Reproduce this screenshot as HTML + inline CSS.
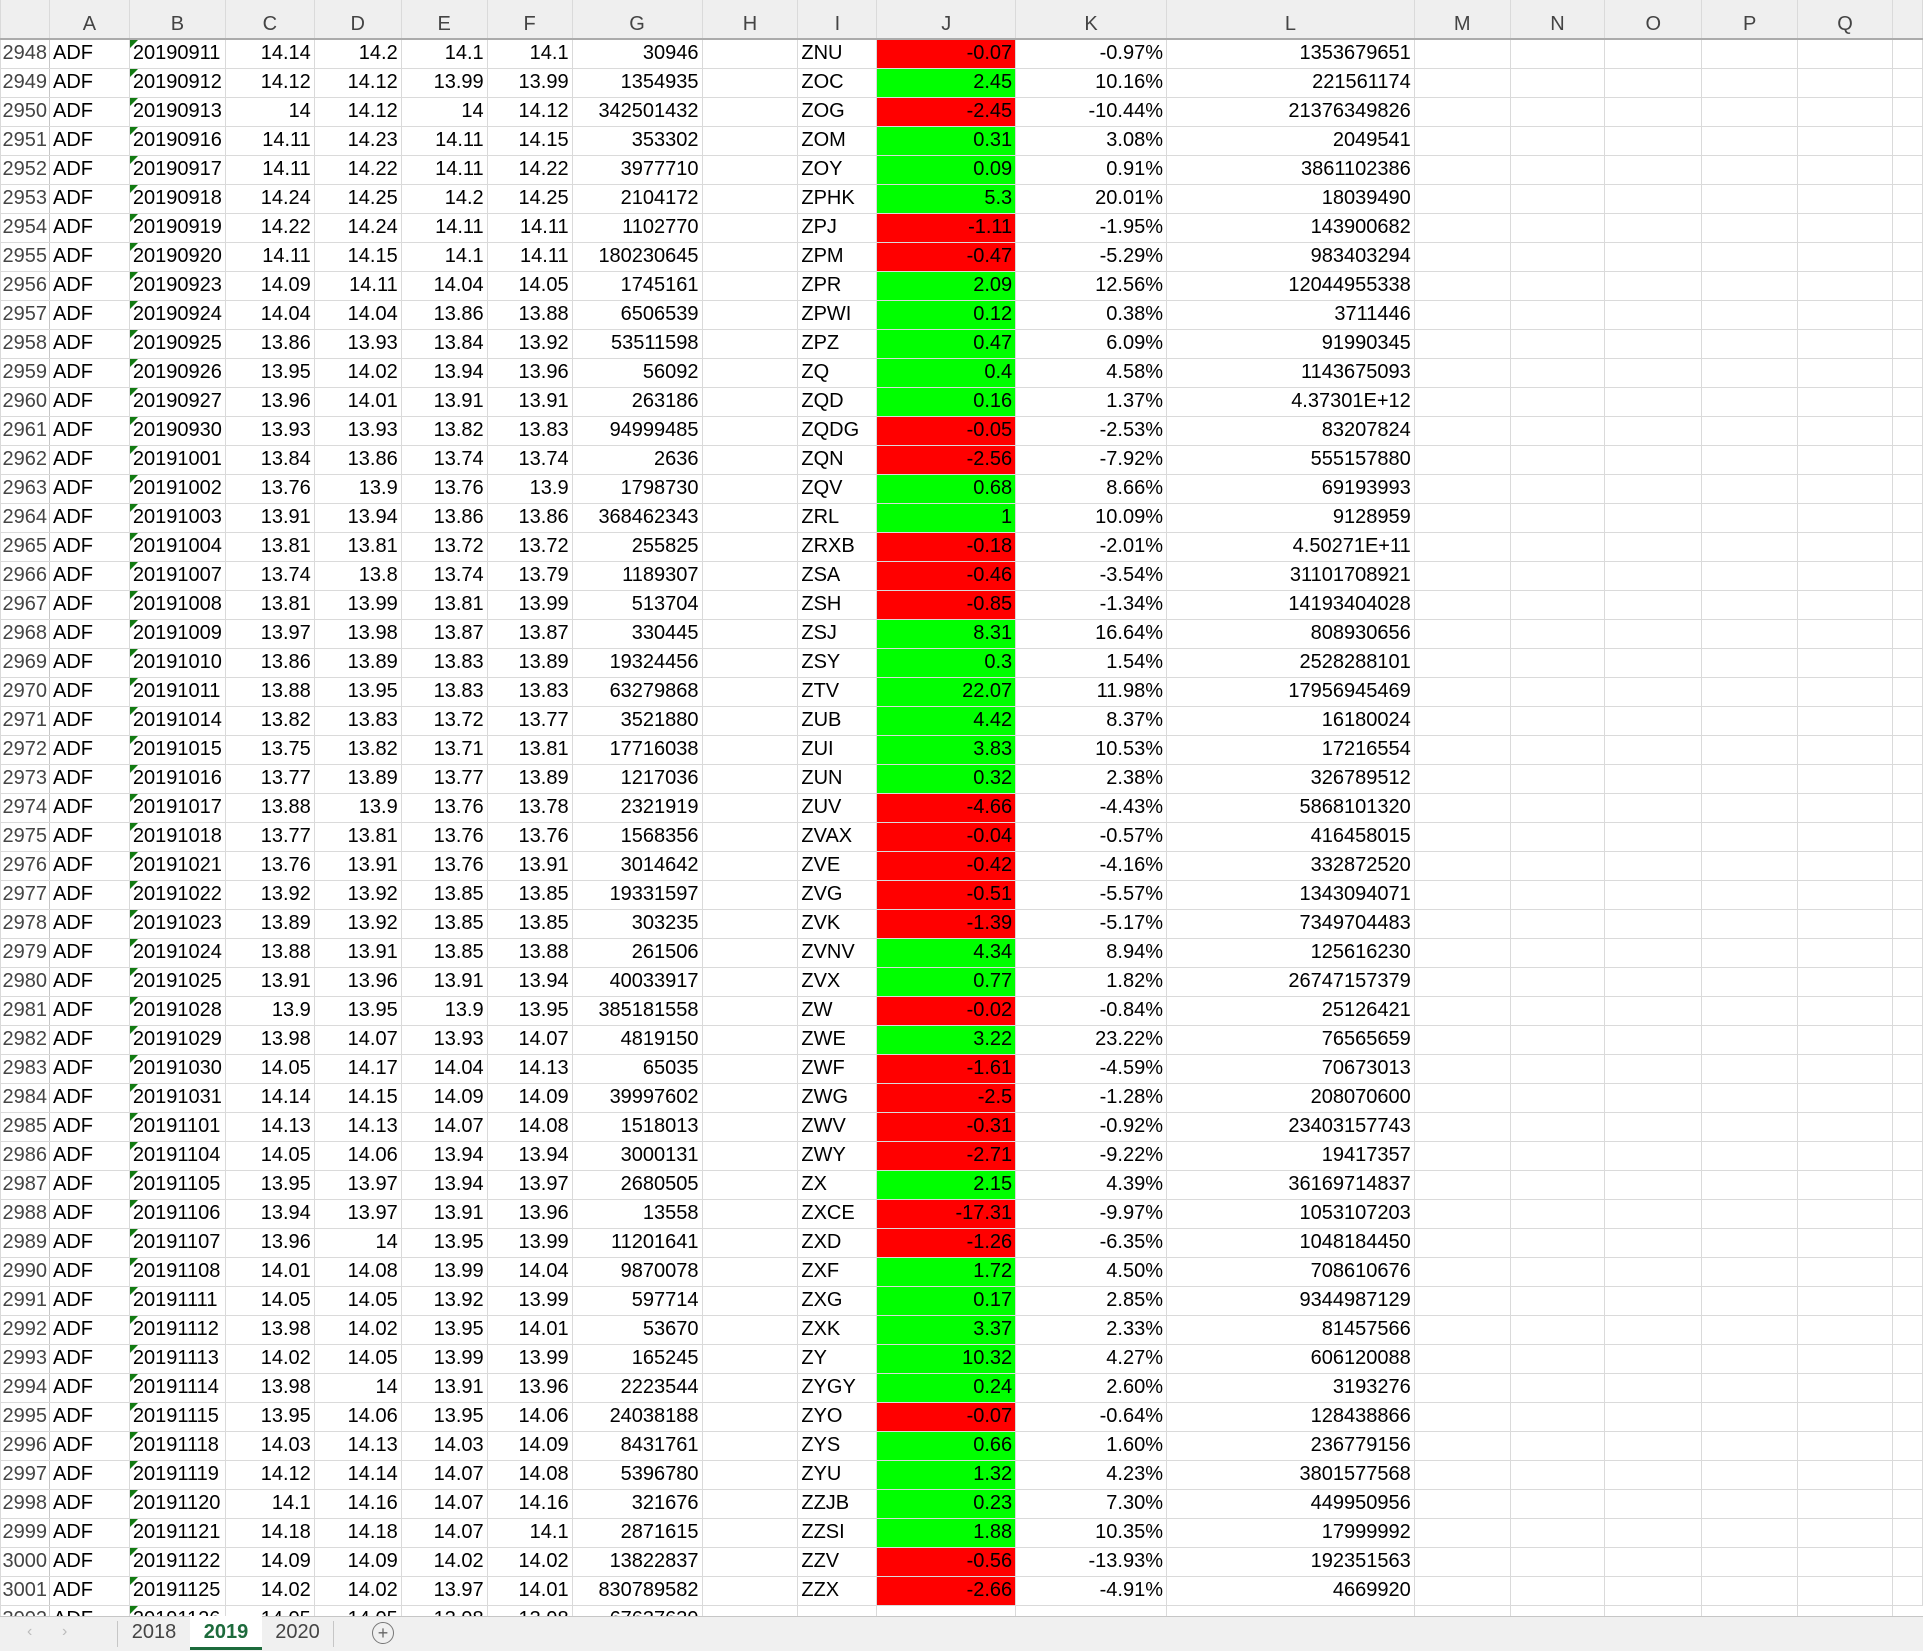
<!DOCTYPE html>
<html><head><meta charset="utf-8"><style>
body{margin:0;width:1923px;height:1651px;overflow:hidden;background:#fff;font-family:"Liberation Sans",Arial,sans-serif;}
#wrap{position:absolute;left:0;top:0;width:1923px;height:1616px;overflow:hidden;}
table{border-collapse:collapse;table-layout:fixed;font-size:20px;color:#000;}
td,th{padding:0 3px;white-space:nowrap;overflow:hidden;border:1px solid #dadada;text-align:right;font-weight:normal;box-sizing:border-box;}
tr{height:29px;}
thead th{height:39px;background:#efefef;color:#444;text-align:center;vertical-align:bottom;padding-bottom:2px;border-color:#dadada;border-top:none;border-bottom:2px solid #ababab;font-size:20px;}
tbody th{color:#444;background:#fff;text-align:right;padding:0 2px 0 0;border-right:1px solid #c8c8c8;}
td.l{text-align:left;}
td.b{position:relative;text-align:left;}
td.b:before{content:"";position:absolute;left:0;top:0;border-top:8px solid #127a12;border-right:8px solid transparent;}
td.r{background:#ff0000;}
td.g{background:#00ff00;}
#tabs{position:absolute;left:0;top:1616px;width:1923px;height:35px;background:#f0f0f0;border-top:1px solid #c6c6c6;box-sizing:border-box;color:#444;font-size:20px;}
.tab{position:absolute;top:0;height:33px;line-height:30px;text-align:center;}
</style></head><body>
<div id="wrap">
<table>
<colgroup><col style="width:49px"><col style="width:80px"><col style="width:95px"><col style="width:89px"><col style="width:87px"><col style="width:86px"><col style="width:85px"><col style="width:130px"><col style="width:96px"><col style="width:79px"><col style="width:139px"><col style="width:151px"><col style="width:248px"><col style="width:96px"><col style="width:95px"><col style="width:97px"><col style="width:96px"><col style="width:95px"><col style="width:30px"></colgroup>
<thead><tr><th></th><th>A</th><th>B</th><th>C</th><th>D</th><th>E</th><th>F</th><th>G</th><th>H</th><th>I</th><th>J</th><th>K</th><th>L</th><th>M</th><th>N</th><th>O</th><th>P</th><th>Q</th><th></th></tr></thead>
<tbody>
<tr><th>2948<td class=l>ADF<td class=b>20190911<td>14.14<td>14.2<td>14.1<td>14.1<td>30946<td><td class=l>ZNU<td class=r>-0.07<td>-0.97%<td>1353679651<td><td><td><td><td><td></tr>
<tr><th>2949<td class=l>ADF<td class=b>20190912<td>14.12<td>14.12<td>13.99<td>13.99<td>1354935<td><td class=l>ZOC<td class=g>2.45<td>10.16%<td>221561174<td><td><td><td><td><td></tr>
<tr><th>2950<td class=l>ADF<td class=b>20190913<td>14<td>14.12<td>14<td>14.12<td>342501432<td><td class=l>ZOG<td class=r>-2.45<td>-10.44%<td>21376349826<td><td><td><td><td><td></tr>
<tr><th>2951<td class=l>ADF<td class=b>20190916<td>14.11<td>14.23<td>14.11<td>14.15<td>353302<td><td class=l>ZOM<td class=g>0.31<td>3.08%<td>2049541<td><td><td><td><td><td></tr>
<tr><th>2952<td class=l>ADF<td class=b>20190917<td>14.11<td>14.22<td>14.11<td>14.22<td>3977710<td><td class=l>ZOY<td class=g>0.09<td>0.91%<td>3861102386<td><td><td><td><td><td></tr>
<tr><th>2953<td class=l>ADF<td class=b>20190918<td>14.24<td>14.25<td>14.2<td>14.25<td>2104172<td><td class=l>ZPHK<td class=g>5.3<td>20.01%<td>18039490<td><td><td><td><td><td></tr>
<tr><th>2954<td class=l>ADF<td class=b>20190919<td>14.22<td>14.24<td>14.11<td>14.11<td>1102770<td><td class=l>ZPJ<td class=r>-1.11<td>-1.95%<td>143900682<td><td><td><td><td><td></tr>
<tr><th>2955<td class=l>ADF<td class=b>20190920<td>14.11<td>14.15<td>14.1<td>14.11<td>180230645<td><td class=l>ZPM<td class=r>-0.47<td>-5.29%<td>983403294<td><td><td><td><td><td></tr>
<tr><th>2956<td class=l>ADF<td class=b>20190923<td>14.09<td>14.11<td>14.04<td>14.05<td>1745161<td><td class=l>ZPR<td class=g>2.09<td>12.56%<td>12044955338<td><td><td><td><td><td></tr>
<tr><th>2957<td class=l>ADF<td class=b>20190924<td>14.04<td>14.04<td>13.86<td>13.88<td>6506539<td><td class=l>ZPWI<td class=g>0.12<td>0.38%<td>3711446<td><td><td><td><td><td></tr>
<tr><th>2958<td class=l>ADF<td class=b>20190925<td>13.86<td>13.93<td>13.84<td>13.92<td>53511598<td><td class=l>ZPZ<td class=g>0.47<td>6.09%<td>91990345<td><td><td><td><td><td></tr>
<tr><th>2959<td class=l>ADF<td class=b>20190926<td>13.95<td>14.02<td>13.94<td>13.96<td>56092<td><td class=l>ZQ<td class=g>0.4<td>4.58%<td>1143675093<td><td><td><td><td><td></tr>
<tr><th>2960<td class=l>ADF<td class=b>20190927<td>13.96<td>14.01<td>13.91<td>13.91<td>263186<td><td class=l>ZQD<td class=g>0.16<td>1.37%<td>4.37301E+12<td><td><td><td><td><td></tr>
<tr><th>2961<td class=l>ADF<td class=b>20190930<td>13.93<td>13.93<td>13.82<td>13.83<td>94999485<td><td class=l>ZQDG<td class=r>-0.05<td>-2.53%<td>83207824<td><td><td><td><td><td></tr>
<tr><th>2962<td class=l>ADF<td class=b>20191001<td>13.84<td>13.86<td>13.74<td>13.74<td>2636<td><td class=l>ZQN<td class=r>-2.56<td>-7.92%<td>555157880<td><td><td><td><td><td></tr>
<tr><th>2963<td class=l>ADF<td class=b>20191002<td>13.76<td>13.9<td>13.76<td>13.9<td>1798730<td><td class=l>ZQV<td class=g>0.68<td>8.66%<td>69193993<td><td><td><td><td><td></tr>
<tr><th>2964<td class=l>ADF<td class=b>20191003<td>13.91<td>13.94<td>13.86<td>13.86<td>368462343<td><td class=l>ZRL<td class=g>1<td>10.09%<td>9128959<td><td><td><td><td><td></tr>
<tr><th>2965<td class=l>ADF<td class=b>20191004<td>13.81<td>13.81<td>13.72<td>13.72<td>255825<td><td class=l>ZRXB<td class=r>-0.18<td>-2.01%<td>4.50271E+11<td><td><td><td><td><td></tr>
<tr><th>2966<td class=l>ADF<td class=b>20191007<td>13.74<td>13.8<td>13.74<td>13.79<td>1189307<td><td class=l>ZSA<td class=r>-0.46<td>-3.54%<td>31101708921<td><td><td><td><td><td></tr>
<tr><th>2967<td class=l>ADF<td class=b>20191008<td>13.81<td>13.99<td>13.81<td>13.99<td>513704<td><td class=l>ZSH<td class=r>-0.85<td>-1.34%<td>14193404028<td><td><td><td><td><td></tr>
<tr><th>2968<td class=l>ADF<td class=b>20191009<td>13.97<td>13.98<td>13.87<td>13.87<td>330445<td><td class=l>ZSJ<td class=g>8.31<td>16.64%<td>808930656<td><td><td><td><td><td></tr>
<tr><th>2969<td class=l>ADF<td class=b>20191010<td>13.86<td>13.89<td>13.83<td>13.89<td>19324456<td><td class=l>ZSY<td class=g>0.3<td>1.54%<td>2528288101<td><td><td><td><td><td></tr>
<tr><th>2970<td class=l>ADF<td class=b>20191011<td>13.88<td>13.95<td>13.83<td>13.83<td>63279868<td><td class=l>ZTV<td class=g>22.07<td>11.98%<td>17956945469<td><td><td><td><td><td></tr>
<tr><th>2971<td class=l>ADF<td class=b>20191014<td>13.82<td>13.83<td>13.72<td>13.77<td>3521880<td><td class=l>ZUB<td class=g>4.42<td>8.37%<td>16180024<td><td><td><td><td><td></tr>
<tr><th>2972<td class=l>ADF<td class=b>20191015<td>13.75<td>13.82<td>13.71<td>13.81<td>17716038<td><td class=l>ZUI<td class=g>3.83<td>10.53%<td>17216554<td><td><td><td><td><td></tr>
<tr><th>2973<td class=l>ADF<td class=b>20191016<td>13.77<td>13.89<td>13.77<td>13.89<td>1217036<td><td class=l>ZUN<td class=g>0.32<td>2.38%<td>326789512<td><td><td><td><td><td></tr>
<tr><th>2974<td class=l>ADF<td class=b>20191017<td>13.88<td>13.9<td>13.76<td>13.78<td>2321919<td><td class=l>ZUV<td class=r>-4.66<td>-4.43%<td>5868101320<td><td><td><td><td><td></tr>
<tr><th>2975<td class=l>ADF<td class=b>20191018<td>13.77<td>13.81<td>13.76<td>13.76<td>1568356<td><td class=l>ZVAX<td class=r>-0.04<td>-0.57%<td>416458015<td><td><td><td><td><td></tr>
<tr><th>2976<td class=l>ADF<td class=b>20191021<td>13.76<td>13.91<td>13.76<td>13.91<td>3014642<td><td class=l>ZVE<td class=r>-0.42<td>-4.16%<td>332872520<td><td><td><td><td><td></tr>
<tr><th>2977<td class=l>ADF<td class=b>20191022<td>13.92<td>13.92<td>13.85<td>13.85<td>19331597<td><td class=l>ZVG<td class=r>-0.51<td>-5.57%<td>1343094071<td><td><td><td><td><td></tr>
<tr><th>2978<td class=l>ADF<td class=b>20191023<td>13.89<td>13.92<td>13.85<td>13.85<td>303235<td><td class=l>ZVK<td class=r>-1.39<td>-5.17%<td>7349704483<td><td><td><td><td><td></tr>
<tr><th>2979<td class=l>ADF<td class=b>20191024<td>13.88<td>13.91<td>13.85<td>13.88<td>261506<td><td class=l>ZVNV<td class=g>4.34<td>8.94%<td>125616230<td><td><td><td><td><td></tr>
<tr><th>2980<td class=l>ADF<td class=b>20191025<td>13.91<td>13.96<td>13.91<td>13.94<td>40033917<td><td class=l>ZVX<td class=g>0.77<td>1.82%<td>26747157379<td><td><td><td><td><td></tr>
<tr><th>2981<td class=l>ADF<td class=b>20191028<td>13.9<td>13.95<td>13.9<td>13.95<td>385181558<td><td class=l>ZW<td class=r>-0.02<td>-0.84%<td>25126421<td><td><td><td><td><td></tr>
<tr><th>2982<td class=l>ADF<td class=b>20191029<td>13.98<td>14.07<td>13.93<td>14.07<td>4819150<td><td class=l>ZWE<td class=g>3.22<td>23.22%<td>76565659<td><td><td><td><td><td></tr>
<tr><th>2983<td class=l>ADF<td class=b>20191030<td>14.05<td>14.17<td>14.04<td>14.13<td>65035<td><td class=l>ZWF<td class=r>-1.61<td>-4.59%<td>70673013<td><td><td><td><td><td></tr>
<tr><th>2984<td class=l>ADF<td class=b>20191031<td>14.14<td>14.15<td>14.09<td>14.09<td>39997602<td><td class=l>ZWG<td class=r>-2.5<td>-1.28%<td>208070600<td><td><td><td><td><td></tr>
<tr><th>2985<td class=l>ADF<td class=b>20191101<td>14.13<td>14.13<td>14.07<td>14.08<td>1518013<td><td class=l>ZWV<td class=r>-0.31<td>-0.92%<td>23403157743<td><td><td><td><td><td></tr>
<tr><th>2986<td class=l>ADF<td class=b>20191104<td>14.05<td>14.06<td>13.94<td>13.94<td>3000131<td><td class=l>ZWY<td class=r>-2.71<td>-9.22%<td>19417357<td><td><td><td><td><td></tr>
<tr><th>2987<td class=l>ADF<td class=b>20191105<td>13.95<td>13.97<td>13.94<td>13.97<td>2680505<td><td class=l>ZX<td class=g>2.15<td>4.39%<td>36169714837<td><td><td><td><td><td></tr>
<tr><th>2988<td class=l>ADF<td class=b>20191106<td>13.94<td>13.97<td>13.91<td>13.96<td>13558<td><td class=l>ZXCE<td class=r>-17.31<td>-9.97%<td>1053107203<td><td><td><td><td><td></tr>
<tr><th>2989<td class=l>ADF<td class=b>20191107<td>13.96<td>14<td>13.95<td>13.99<td>11201641<td><td class=l>ZXD<td class=r>-1.26<td>-6.35%<td>1048184450<td><td><td><td><td><td></tr>
<tr><th>2990<td class=l>ADF<td class=b>20191108<td>14.01<td>14.08<td>13.99<td>14.04<td>9870078<td><td class=l>ZXF<td class=g>1.72<td>4.50%<td>708610676<td><td><td><td><td><td></tr>
<tr><th>2991<td class=l>ADF<td class=b>20191111<td>14.05<td>14.05<td>13.92<td>13.99<td>597714<td><td class=l>ZXG<td class=g>0.17<td>2.85%<td>9344987129<td><td><td><td><td><td></tr>
<tr><th>2992<td class=l>ADF<td class=b>20191112<td>13.98<td>14.02<td>13.95<td>14.01<td>53670<td><td class=l>ZXK<td class=g>3.37<td>2.33%<td>81457566<td><td><td><td><td><td></tr>
<tr><th>2993<td class=l>ADF<td class=b>20191113<td>14.02<td>14.05<td>13.99<td>13.99<td>165245<td><td class=l>ZY<td class=g>10.32<td>4.27%<td>606120088<td><td><td><td><td><td></tr>
<tr><th>2994<td class=l>ADF<td class=b>20191114<td>13.98<td>14<td>13.91<td>13.96<td>2223544<td><td class=l>ZYGY<td class=g>0.24<td>2.60%<td>3193276<td><td><td><td><td><td></tr>
<tr><th>2995<td class=l>ADF<td class=b>20191115<td>13.95<td>14.06<td>13.95<td>14.06<td>24038188<td><td class=l>ZYO<td class=r>-0.07<td>-0.64%<td>128438866<td><td><td><td><td><td></tr>
<tr><th>2996<td class=l>ADF<td class=b>20191118<td>14.03<td>14.13<td>14.03<td>14.09<td>8431761<td><td class=l>ZYS<td class=g>0.66<td>1.60%<td>236779156<td><td><td><td><td><td></tr>
<tr><th>2997<td class=l>ADF<td class=b>20191119<td>14.12<td>14.14<td>14.07<td>14.08<td>5396780<td><td class=l>ZYU<td class=g>1.32<td>4.23%<td>3801577568<td><td><td><td><td><td></tr>
<tr><th>2998<td class=l>ADF<td class=b>20191120<td>14.1<td>14.16<td>14.07<td>14.16<td>321676<td><td class=l>ZZJB<td class=g>0.23<td>7.30%<td>449950956<td><td><td><td><td><td></tr>
<tr><th>2999<td class=l>ADF<td class=b>20191121<td>14.18<td>14.18<td>14.07<td>14.1<td>2871615<td><td class=l>ZZSI<td class=g>1.88<td>10.35%<td>17999992<td><td><td><td><td><td></tr>
<tr><th>3000<td class=l>ADF<td class=b>20191122<td>14.09<td>14.09<td>14.02<td>14.02<td>13822837<td><td class=l>ZZV<td class=r>-0.56<td>-13.93%<td>192351563<td><td><td><td><td><td></tr>
<tr><th>3001<td class=l>ADF<td class=b>20191125<td>14.02<td>14.02<td>13.97<td>14.01<td>830789582<td><td class=l>ZZX<td class=r>-2.66<td>-4.91%<td>4669920<td><td><td><td><td><td></tr>
<tr><th>3002<td class=l>ADF<td class=b>20191126<td>14.05<td>14.05<td>13.98<td>13.98<td>67637639<td><td class=l><td><td><td><td><td><td><td><td></tr>
</tbody></table>
</div>
<div id="tabs">
<span style="position:absolute;left:27px;top:6px;color:#bbb;font-size:16px;">&#8249;</span>
<span style="position:absolute;left:62px;top:6px;color:#bbb;font-size:16px;">&#8250;</span>
<div style="position:absolute;left:117px;top:4px;width:1px;height:26px;background:#c6c6c6"></div>
<div class="tab" style="left:118px;width:72px;">2018</div>
<div class="tab" style="left:190px;width:72px;background:#fff;color:#1d6b3c;font-weight:bold;border-bottom:3px solid #1d6b3c;box-sizing:border-box;height:34px;top:-1px;line-height:32px;">2019</div>
<div class="tab" style="left:262px;width:71px;">2020</div>
<div style="position:absolute;left:333px;top:4px;width:1px;height:26px;background:#c6c6c6"></div>
<div style="position:absolute;left:372px;top:5px;width:20px;height:20px;border:1px solid #777;border-radius:50%;color:#666;font-size:18px;line-height:20px;text-align:center;">+</div>
</div>
</body></html>
